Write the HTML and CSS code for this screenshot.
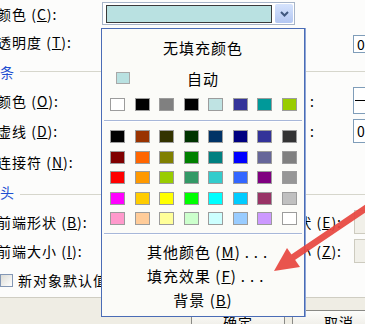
FILE: index.html
```html
<!DOCTYPE html>
<html>
  <head>
    <title>设置自选图形格式 - 颜色与线条</title>
    <link rel="stylesheet" href="styles.css">
  </head>
  <body>
    <div class="dialog">
      <div class="page">
        <div class="row r1">
          <span class="label">颜色 (<u>C</u>):</span>
          <div class="mid">
            <div class="combo">
              <span class="combo-swatch"></span>
              <span class="combo-btn">
                <svg width="9" height="6" viewBox="0 0 9 6"><path d="M1 1 L4.5 4.5 L8 1" fill="none" stroke="#40577f" stroke-width="2"/></svg>
              </span>
            </div>
          </div>
        </div>
        <div class="row r2">
          <span class="label">透明度 (<u>T</u>):</span>
          <div class="mid"></div>
          <div class="right"><span class="rlabel"></span><span class="field field-low">0 %</span></div>
        </div>

        <div class="section s1">
          <span class="section-title">线条</span>
          <span class="section-line"></span>
        </div>

        <div class="row r3">
          <span class="label">颜色 (<u>O</u>):</span>
          <div class="mid"></div>
          <div class="right"><span class="rlabel rlabel-near">样式 (<u>S</u>)&nbsp;:</span><span class="field field-tall"><span class="dash"></span></span></div>
        </div>
        <div class="row r4">
          <span class="label">虚线 (<u>D</u>):</span>
          <div class="mid"></div>
          <div class="right"><span class="rlabel rlabel-near">粗细 (<u>W</u>)&nbsp;:</span><span class="field">0.75 磅</span></div>
        </div>
        <div class="row r5">
          <span class="label">连接符 (<u>N</u>):</span>
          <div class="mid"></div>
        </div>

        <div class="section s2">
          <span class="section-title">箭头</span>
          <span class="section-line"></span>
        </div>

        <div class="row r6">
          <span class="label">前端形状 (<u>B</u>):</span>
          <div class="mid"></div>
          <div class="right"><span class="rlabel rlabel-far">后端形状 (<u>E</u>):</span><span class="field field-off"></span></div>
        </div>
        <div class="row r7">
          <span class="label">前端大小 (<u>I</u>):</span>
          <div class="mid"></div>
          <div class="right"><span class="rlabel rlabel-far">后端大小 (<u>Z</u>):</span><span class="field field-off"></span></div>
        </div>
        <div class="row r8">
          <span class="check-label"><span class="checkbox"></span>新对象默认值 (<u>F</u>)</span>
        </div>
      </div>

      <div class="footer">
        <button class="btn">确定</button>
        <button class="btn">取消</button>
      </div>

      <!-- colour picker dropdown -->
      <div class="popup">
        <div class="popup-title">无填充颜色</div>
        <div class="auto-row">
          <span class="auto-swatch"></span>
          <span>自动</span>
          <span></span>
        </div>
        <div class="swatch-row">
          <span class="swatch" style="background:#ffffff"></span>
          <span class="swatch" style="background:#000000"></span>
          <span class="swatch" style="background:#808080"></span>
          <span class="swatch" style="background:#000000"></span>
          <span class="swatch" style="background:#bfe3e3"></span>
          <span class="swatch" style="background:#333399"></span>
          <span class="swatch" style="background:#009999"></span>
          <span class="swatch" style="background:#99cc00"></span>
        </div>
        <div class="sep"></div>
        <div class="grid">
          <span class="swatch" style="background:#000000"></span>
          <span class="swatch" style="background:#993300"></span>
          <span class="swatch" style="background:#333300"></span>
          <span class="swatch" style="background:#003300"></span>
          <span class="swatch" style="background:#003366"></span>
          <span class="swatch" style="background:#000080"></span>
          <span class="swatch" style="background:#333399"></span>
          <span class="swatch" style="background:#333333"></span>

          <span class="swatch" style="background:#800000"></span>
          <span class="swatch" style="background:#ff6600"></span>
          <span class="swatch" style="background:#808000"></span>
          <span class="swatch" style="background:#008000"></span>
          <span class="swatch" style="background:#008080"></span>
          <span class="swatch" style="background:#0000ff"></span>
          <span class="swatch" style="background:#666699"></span>
          <span class="swatch" style="background:#808080"></span>

          <span class="swatch" style="background:#ff0000"></span>
          <span class="swatch" style="background:#ff9900"></span>
          <span class="swatch" style="background:#99cc00"></span>
          <span class="swatch" style="background:#339966"></span>
          <span class="swatch" style="background:#33cccc"></span>
          <span class="swatch" style="background:#3366ff"></span>
          <span class="swatch" style="background:#800080"></span>
          <span class="swatch" style="background:#969696"></span>

          <span class="swatch" style="background:#ff00ff"></span>
          <span class="swatch" style="background:#ffcc00"></span>
          <span class="swatch" style="background:#ffff00"></span>
          <span class="swatch" style="background:#00ff00"></span>
          <span class="swatch" style="background:#00ffff"></span>
          <span class="swatch" style="background:#00ccff"></span>
          <span class="swatch" style="background:#993366"></span>
          <span class="swatch" style="background:#c0c0c0"></span>

          <span class="swatch" style="background:#ff99cc"></span>
          <span class="swatch" style="background:#ffcc99"></span>
          <span class="swatch" style="background:#ffff99"></span>
          <span class="swatch" style="background:#ccffcc"></span>
          <span class="swatch" style="background:#ccffff"></span>
          <span class="swatch" style="background:#99ccff"></span>
          <span class="swatch" style="background:#cc99ff"></span>
          <span class="swatch" style="background:#ffffff"></span>
        </div>
        <div class="sep sep-low"></div>
        <div class="menu">
          <div class="menu-item">其他颜色 (<u>M</u>)<span class="dots">...</span></div>
          <div class="menu-item">填充效果 (<u>F</u>)<span class="dots">...</span></div>
          <div class="menu-item menu-center">背景 (<u>B</u>)</div>
        </div>
      </div>

      <svg class="arrow" width="365" height="324" viewBox="0 0 365 324">
        <line x1="292" y1="258" x2="372" y2="204" stroke="#e8463f" stroke-width="6.5" stroke-linecap="round"/>
        <polygon points="274,271 287,248 300,267" fill="#e8463f"/>
      </svg>
    </div>
  </body>
</html>
```

FILE: styles.css
```css
* {
  box-sizing: border-box;
}

body {
  margin: 0;
  width: 365px;
  height: 324px;
  overflow: hidden;
  font-family: 'Noto Sans CJK SC', 'Noto Sans', sans-serif;
  font-size: 14px;
  color: #000;
  background: #fcfcfb;
}

u {
  text-decoration: underline;
  text-underline-offset: 1px;
}

.dialog {
  position: relative;
  width: 365px;
  height: 324px;
  display: flex;
  flex-direction: column;
}

.page {
  height: 297px;
  flex-shrink: 0;
  background: #fcfcfb;
}

.row {
  display: grid;
  grid-template-columns: 101px 204px 1fr;
  align-items: center;
}

.r1 { height: 27px; }
.r2 { height: 30px; }
.s1 { height: 29px; }
.r3 { height: 29px; }
.r4 { height: 32px; }
.r5 { height: 30px; }
.s2 { height: 30px; }
.r6 { height: 29px; }
.r7 { height: 30px; }
.r8 { height: 28px; }

.label {
  white-space: nowrap;
  margin-left: -3px;
  letter-spacing: 1px;
}

.combo {
  margin-left: 1px;
  width: 193px;
  height: 23px;
  border: 1px solid #a7b5c9;
  background: #fff;
  display: flex;
  align-items: center;
  gap: 3px;
  padding: 1px 1px 1px 3px;
}

.combo-swatch {
  width: 166px;
  height: 18px;
  background: #b9e1e1;
  border: 1px solid #3a3a3a;
}

.combo-btn {
  width: 18px;
  height: 19px;
  border-radius: 2px;
  background: linear-gradient(#d6e3fd, #b3c7f2);
  display: flex;
  align-items: center;
  justify-content: center;
}

.right {
  display: flex;
  align-items: center;
  height: 100%;
}

.rlabel {
  flex: none;
  width: 48px;
  display: flex;
  justify-content: flex-end;
  white-space: nowrap;
  letter-spacing: 1px;
}

.rlabel-near {
  padding-right: 38px;
}

.rlabel-far {
  padding-right: 11px;
}

.field {
  flex: none;
  width: 60px;
  height: 24px;
  border: 1px solid #7f9db9;
  background: #fff;
  padding-left: 3px;
  display: flex;
  align-items: center;
  white-space: nowrap;
}

.field-low {
  align-self: flex-end;
  height: 18px;
  margin-bottom: 4px;
}

.field-tall {
  height: 27px;
  padding-left: 1px;
}

.dash {
  width: 20px;
  height: 1px;
  background: #000;
}

.field-off {
  margin-left: 1px;
  background: #f1f0e9;
  border-color: #cdcbbf;
}

.section {
  display: flex;
  align-items: center;
}

.section-title {
  color: #1f4fd1;
  margin-left: -15px;
  letter-spacing: 1px;
  white-space: nowrap;
}

.section-line {
  flex: 1;
  height: 1px;
  margin-left: 5px;
  background: #d6d6cc;
}

.s2 .section-line {
  margin-top: 4px;
}

.check-label {
  display: flex;
  align-items: center;
  gap: 5px;
  white-space: nowrap;
  letter-spacing: 1px;
}

.checkbox {
  flex: none;
  width: 13px;
  height: 13px;
  border: 1px solid #8397b5;
  background: linear-gradient(135deg, #dcdcd6, #ffffff);
}

.footer {
  flex: 1;
  background: #efede4;
  border-top: 1px solid #cfcdc2;
  display: flex;
  align-items: flex-start;
  gap: 7px;
  padding: 12px 0 0 191px;
}

.btn {
  flex: none;
  width: 94px;
  height: 24px;
  padding: 0;
  font: inherit;
  line-height: 22px;
  letter-spacing: 1px;
  color: #000;
  border: 1px solid #8a8a86;
  border-radius: 3px;
  background: linear-gradient(#fdfdfb, #e9e7df);
}

/* dropdown colour picker */

.popup {
  position: absolute;
  left: 101px;
  top: 28px;
  width: 204px;
  border: 1px solid #4a6cb6;
  box-shadow: 1px 0 0 #8ea5d6;
  background: #fbfbf8;
  padding-bottom: 4px;
  font-size: 15px;
  z-index: 2;
}

.popup-title {
  height: 37px;
  display: flex;
  align-items: center;
  justify-content: center;
  letter-spacing: 1px;
}

.auto-row {
  height: 24px;
  display: grid;
  grid-template-columns: 1fr auto 1fr;
  align-items: center;
  letter-spacing: 1px;
}

.auto-swatch {
  width: 14px;
  height: 12px;
  margin-left: 14px;
  background: #b9e1e1;
  border: 1px solid #a8a8a8;
}

.swatch-row {
  display: flex;
  justify-content: space-between;
  padding: 0 7px 0 8px;
  margin-top: 8px;
}

.swatch {
  width: 15px;
  height: 13px;
  border: 1px solid #9c9c9c;
}

.sep {
  height: 2px;
  margin: 9px 2px 0;
  border-top: 1px solid #a7b7d9;
  border-bottom: 1px solid #ffffff;
}

.sep-low {
  margin-top: 8px;
}

.grid {
  display: grid;
  grid-template-columns: repeat(8, 15px);
  justify-content: space-between;
  row-gap: 7.5px;
  padding: 0 7px 0 8px;
  margin-top: 8px;
}

.menu {
  margin-top: 5px;
}

.menu-item {
  height: 24px;
  line-height: 24px;
  padding-left: 45px;
  white-space: nowrap;
  letter-spacing: 1px;
}

.menu-center {
  padding-left: 0;
  text-align: center;
}

.dots {
  margin-left: 4px;
  letter-spacing: 5px;
}

.arrow {
  position: absolute;
  left: 0;
  top: 0;
  pointer-events: none;
  z-index: 3;
  opacity: 0.92;
}
```
